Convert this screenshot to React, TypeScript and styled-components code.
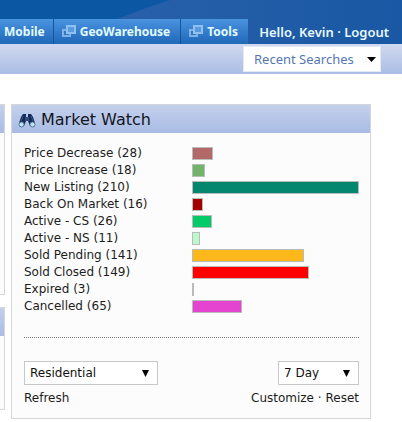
import React from "react";
import styled, { createGlobalStyle } from "styled-components";

const GlobalStyle = createGlobalStyle`
  * { box-sizing: border-box; }
  body {
    margin: 0;
    background: #fff;
    color: #1c1c1c;
    font: 12px/17px Verdana, "DejaVu Sans", sans-serif;
  }
  a { color: inherit; text-decoration: none; }
`;

const Header = styled.header`
  position: relative;
  display: flex;
  align-items: flex-end;
  justify-content: space-between;
  height: 44px;
  background: #0b57a4;
`;

const Swoosh = styled.svg`
  position: absolute;
  inset: 0;
  width: 100%;
  height: 100%;
`;

const Nav = styled.nav`
  position: relative;
  display: flex;
  height: 25px;
`;

const NavLink = styled.a<{ $first?: boolean; $last?: boolean }>`
  display: flex;
  align-items: center;
  gap: 4px;
  padding: ${(p) => (p.$first ? "0 8px 0 4px" : "0 10px 0 8px")};
  border-right: ${(p) => (p.$last ? "none" : "1px solid #15559f")};
  background: linear-gradient(#4a93df, #2068b8);
  color: #e2fbff;
  font: bold 12px/25px "Noto Sans", sans-serif;
  white-space: nowrap;
`;

const UserLinks = styled.div`
  position: relative;
  padding-right: 13px;
  color: #e8f8ff;
  font: 600 13px/23px "Noto Sans", sans-serif;
  white-space: nowrap;
`;

const SubBar = styled.div`
  display: flex;
  justify-content: flex-end;
  height: 30px;
  padding: 2px 21px 0 0;
  background: linear-gradient(#d0d9ef, #aabde5);
`;

const RecentButton = styled.button`
  display: flex;
  align-items: center;
  justify-content: space-between;
  width: 138px;
  height: 26px;
  padding: 0 4px 0 10px;
  border: 1px solid #e3e9f6;
  background: #fff;
  color: #5577b3;
  font: 13px/24px "Noto Sans", sans-serif;
`;

const Main = styled.main`
  display: grid;
  grid-template-columns: 5px minmax(0, 1fr);
  column-gap: 6px;
  align-items: start;
  padding: 30px 31px 0 0;
`;

const Side = styled.div`
  display: grid;
  gap: 12px;
`;

const SidePanel = styled.div<{ $height: number }>`
  height: ${(p) => p.$height}px;
  border: 1px solid #d5d6d9;
  border-left: none;
  background: linear-gradient(#c4d0ec, #a9bce5) top / 100% 28px no-repeat #fcfcfc;
`;

const Panel = styled.section`
  border: 1px solid #d5d6d9;
  background: #fcfcfc;
`;

const PanelHeader = styled.h2`
  display: flex;
  align-items: center;
  gap: 5px;
  height: 28px;
  margin: 0;
  padding: 2px 6px 0;
  background: linear-gradient(#c4d0ec, #a9bce5);
  color: #14161e;
  font: 16px/26px Verdana, "DejaVu Sans", sans-serif;
`;

const PanelBody = styled.div`
  padding: 12px 11px 11px 12px;
`;

const Stats = styled.ul`
  margin: 0;
  padding: 0 0 22px;
  border-bottom: 1px dotted #777;
  list-style: none;
`;

const Stat = styled.li`
  display: grid;
  grid-template-columns: 168px minmax(0, 1fr);
  align-items: center;
  height: 17px;
`;

const Bar = styled.div<{ $color: string }>`
  height: 13px;
  border: 1px solid #b9bcb9;
  background: ${(p) => p.$color};
`;

const Controls = styled.div`
  display: flex;
  justify-content: space-between;
  padding-top: 23px;
`;

const SelectBox = styled.div<{ $width: number }>`
  position: relative;
  width: ${(p) => p.$width}px;
`;

const Select = styled.select`
  display: block;
  width: 100%;
  height: 24px;
  padding: 0 5px;
  border: 1px solid #c6c9cb;
  border-radius: 0;
  appearance: none;
  background: #fff;
  color: #111;
  font: 12px/22px Verdana, "DejaVu Sans", sans-serif;
`;

const Arrow = styled.svg`
  position: absolute;
  top: 9px;
  right: 9px;
  pointer-events: none;
`;

const Actions = styled.div`
  display: flex;
  justify-content: space-between;
  padding-top: 5px;
`;

const stats = [
  { name: "Price Decrease", count: 28, share: 12.6, color: "#b46969" },
  { name: "Price Increase", count: 18, share: 7.8, color: "#72b46b" },
  { name: "New Listing", count: 210, share: 100, color: "#04876e" },
  { name: "Back On Market", count: 16, share: 6.6, color: "#a40000" },
  { name: "Active - CS", count: 26, share: 12, color: "#04cb68" },
  { name: "Active - NS", count: 11, share: 4.8, color: "#bdf8cd" },
  { name: "Sold Pending", count: 141, share: 67, color: "#fdb91b" },
  { name: "Sold Closed", count: 149, share: 70, color: "#ff0000" },
  { name: "Expired", count: 3, share: 1.2, color: "#aaaaaa" },
  { name: "Cancelled", count: 65, share: 30, color: "#e544d0" },
];

const WindowsIcon = () => (
  <svg width="14" height="13" viewBox="0 0 14 13" aria-hidden="true">
    <path d="M0 4h9v8H0z" fill="#7db3e8" />
    <path d="M2 6h5v4H2z" fill="#3578c2" />
    <path d="M4 0h10v9H4z" fill="#8fc0ef" />
    <path d="M6 2h6v5H6z" fill="#5c9bdb" />
  </svg>
);

const Binoculars = () => (
  <svg width="18" height="15" viewBox="0 0 18 15" aria-hidden="true">
    <path d="M5 1h3v3h2V1h3l2 3 2 6-1 4-4-1-2-5H8l-2 5-4 1-1-4 2-6z" fill="#152b57" />
    <path d="M5 3 3 8M13 3l2 5" stroke="#39578b" />
    <path d="M8 4v4M10 4v4" stroke="#526c9b" />
    <ellipse cx="3.5" cy="11.5" rx="2.5" ry="2.5" fill="#c1e3ed" stroke="#527b9c" />
    <ellipse cx="14.5" cy="11.5" rx="2.5" ry="2.5" fill="#c1e3ed" stroke="#527b9c" />
  </svg>
);

const DownArrow = () => (
  <Arrow width="7" height="7" viewBox="0 0 7 7" aria-hidden="true">
    <path d="M0 0h7L3.5 7z" fill="#000" />
  </Arrow>
);

export default function App() {
  return (
    <>
      <GlobalStyle />
      <Header>
        <Swoosh viewBox="0 0 402 44" preserveAspectRatio="none" aria-hidden="true">
          <defs>
            <linearGradient id="sweep">
              <stop offset="0" stopColor="#2960aa" />
              <stop offset="1" stopColor="#1958a4" />
            </linearGradient>
          </defs>
          <path d="M110 22Q150 6 170 0H402V44H110z" fill="url(#sweep)" />
        </Swoosh>
        <Nav>
          <NavLink href="#mobile" $first>Mobile</NavLink>
          <NavLink href="#geowarehouse"><WindowsIcon />GeoWarehouse</NavLink>
          <NavLink href="#tools" $last><WindowsIcon />Tools</NavLink>
        </Nav>
        <UserLinks>Hello, Kevin · <a href="#logout">Logout</a></UserLinks>
      </Header>
      <SubBar>
        <RecentButton type="button">
          Recent Searches
          <svg width="9" height="5" viewBox="0 0 9 5" aria-hidden="true"><path d="M0 0h9L4.5 5z" /></svg>
        </RecentButton>
      </SubBar>
      <Main>
        <Side>
          <SidePanel $height={191} />
          <SidePanel $height={103} />
        </Side>
        <Panel>
          <PanelHeader><Binoculars />Market Watch</PanelHeader>
          <PanelBody>
            <Stats>
              {stats.map((s) => (
                <Stat key={s.name}>
                  <a href="#results">{s.name} ({s.count})</a>
                  <Bar $color={s.color} style={{ width: `${s.share}%` }} />
                </Stat>
              ))}
            </Stats>
            <Controls>
              <SelectBox $width={134}>
                <Select aria-label="Property type" defaultValue="Residential">
                  <option>Residential</option>
                </Select>
                <DownArrow />
              </SelectBox>
              <SelectBox $width={81}>
                <Select aria-label="Period" defaultValue="7 Day">
                  <option>7 Day</option>
                </Select>
                <DownArrow />
              </SelectBox>
            </Controls>
            <Actions>
              <a href="#refresh">Refresh</a>
              <span><a href="#customize">Customize</a> · <a href="#reset">Reset</a></span>
            </Actions>
          </PanelBody>
        </Panel>
      </Main>
    </>
  );
}
